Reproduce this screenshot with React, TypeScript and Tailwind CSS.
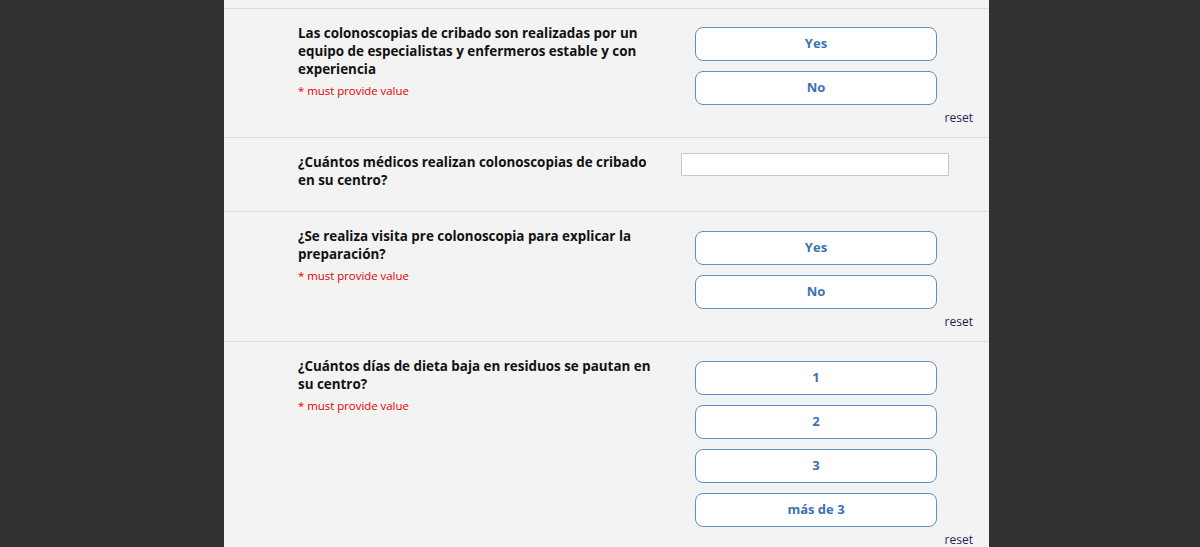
const questions = [
  {
    id: 1,
    label: "Las colonoscopias de cribado son realizadas por un equipo de especialistas y enfermeros estable y con experiencia",
    required: true,
    type: "radio",
    options: ["Yes", "No"],
  },
  {
    id: 2,
    label: "¿Cuántos médicos realizan colonoscopias de cribado en su centro?",
    required: false,
    type: "text",
    options: [],
  },
  {
    id: 3,
    label: "¿Se realiza visita pre colonoscopia para explicar la preparación?",
    required: true,
    type: "radio",
    options: ["Yes", "No"],
  },
  {
    id: 4,
    label: "¿Cuántos días de dieta baja en residuos se pautan en su centro?",
    required: true,
    type: "radio",
    options: ["1", "2", "3", "más de 3"],
  },
]

export default function App() {
  return (
    <div
      className="min-h-[547px] bg-[#323232]"
      style={{ fontFamily: '"Open Sans", "Liberation Sans", sans-serif' }}
    >
      <div className="ml-[224px] w-[765px] bg-[#f3f3f3] pt-[8px]">
        {questions.map((q, i) => (
          <div
            key={q.id}
            className={
              "flex border-t border-[#dcdcdc] pt-[15px] " +
              (q.type === "text" ? "pb-[22px]" : "pb-[12px]")
            }
          >
            <div className="ml-[74px] w-[362px] shrink-0">
              <div className="text-[13.4px] font-bold leading-[18px] text-[#111]">{q.label}</div>
              {q.required && (
                <div className="mt-[6px] text-[11.4px] leading-[14px] text-[#e00000]">
                  * must provide value
                </div>
              )}
            </div>
            <div className="ml-[21px] w-[292px]">
              {q.type === "text" ? (
                <input
                  type="text"
                  className="block h-[23px] w-[268px] border border-[#c8c8c8] bg-white outline-none"
                />
              ) : (
                <>
                  <div
                    className={
                      "ml-[14px] flex w-[242px] flex-col gap-[10px] " + (i === 0 ? "mt-[3px]" : "mt-[4px]")
                    }
                  >
                    {q.options.map((opt) => (
                      <button
                        key={opt}
                        className="h-[34px] w-full rounded-[8px] border border-[#5b91c9] bg-white text-[13px] font-bold text-[#3b72b1]"
                      >
                        {opt}
                      </button>
                    ))}
                  </div>
                  <div className="mt-[6px] text-right text-[12px] leading-[14px] text-[#1b1f5c]">reset</div>
                </>
              )}
            </div>
          </div>
        ))}
      </div>
    </div>
  )
}
